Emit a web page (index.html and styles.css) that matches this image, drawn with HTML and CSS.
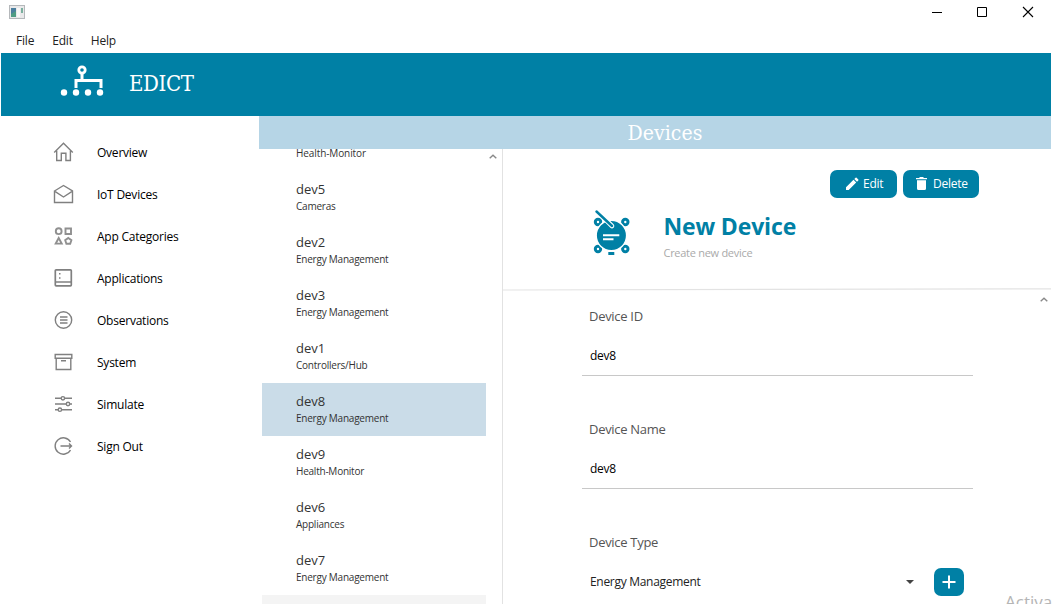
FILE: index.html
```html
<!DOCTYPE html>
<html lang="en">
<head>
<meta charset="utf-8">
<title>EDICT</title>
<link rel="stylesheet" href="styles.css">
</head>
<body>
<div class="window">
  <div class="titlebar">
    <svg class="app-icon" width="16" height="14" viewBox="0 0 16 14"><rect x=".5" y=".5" width="15" height="13" fill="#e9e9ea" stroke="#b5b8bb"/><rect x="2" y="3" width="5" height="9" fill="#4f9c83"/><path d="M2 3h5v3L2 9z" fill="#4c7f9e"/><rect x="8" y="3" width="3" height="9" fill="#f8f8f8"/><rect x="12" y="3" width="2" height="5" fill="#7aaf9e"/></svg>
    <svg class="controls" width="104" height="12" viewBox="0 0 104 12" fill="none" stroke="#000"><path d="M0 6.500h10M45.500 1.500h9v9h-9z"/><path d="M91 1l10 10M101 1l-10 10" stroke-width="1.100"/></svg>
  </div>
  <nav class="menubar"><span>File</span><span>Edit</span><span>Help</span></nav>
  <header class="brand">
    <svg width="44" height="32" viewBox="0 0 44 32" fill="none" stroke="#fff"><circle cx="22" cy="5" r="3.200" stroke-width="2.800"/><path d="M22 9v7M16 23v-7.500h25V23" stroke-width="3"/><g fill="#fff" stroke="none"><circle cx="4" cy="27.500" r="3.200"/><circle cx="16" cy="27.500" r="3.200"/><circle cx="28" cy="27.500" r="3.200"/><circle cx="40" cy="27.500" r="3.200"/></g></svg>
    <h1>EDICT</h1>
  </header>
  <div class="body">
    <aside class="sidebar">
      <a class="nav"><svg viewBox="0 0 20 20"><path d="M.7 10.500 10 1.300l9.300 9.200M3.200 8.800v9.700h4.600v-7.300h4.600v7.300h4.500V8.800"/></svg><span>Overview</span></a>
      <a class="nav"><svg viewBox="0 0 20 20"><path d="M1 7 10 1.500 19 7v11.500H1zM1 7.200l9 5.800 9-5.800"/></svg><span>IoT Devices</span></a>
      <a class="nav"><svg viewBox="0 0 20 20" class="bold"><circle cx="5.200" cy="5.200" r="2.900"/><path d="M12 2.500h5.500V8H12zM5.200 12l-3 5.600h6zM14.800 11.900l3.100 2.300-1.200 3.500h-3.800l-1.200-3.500z"/></svg><span>App Categories</span></a>
      <a class="nav"><svg viewBox="0 0 20 20"><rect x="1.800" y="1.800" width="16" height="16" rx=".8" stroke-width="1.700"/><path d="M2 14h16" stroke-width="1.500"/><path d="M5.500 5.800h1.500M5.500 9.900h1.500" stroke-width="1.500"/></svg><span>Applications</span></a>
      <a class="nav"><svg viewBox="0 0 20 20"><circle cx="10" cy="10" r="8.200"/><path d="M6.500 7h7.500M6.500 10h7.500M6.500 13h7.500"/></svg><span>Observations</span></a>
      <a class="nav"><svg viewBox="0 0 20 20"><path d="M1.700 2.500h16.600v3.700H1.700zM2.700 6.200v11.300h14.600V6.200M7.500 8.800h5"/></svg><span>System</span></a>
      <a class="nav"><svg viewBox="0 0 20 20"><path d="M1.500 4.300h6M11.200 4.300h7.300M1.500 10h11.200M16.300 10h2.200M1.500 15.700h3M8.200 15.700h10.300"/><circle cx="9.400" cy="4.300" r="1.700"/><circle cx="14.500" cy="10" r="1.700"/><circle cx="6.400" cy="15.700" r="1.700"/></svg><span>Simulate</span></a>
      <a class="nav"><svg viewBox="0 0 20 20"><path d="M17 6A8.200 8.200 0 1 0 17 14M7 10h11M15.500 7.500 18 10l-2.500 2.500"/></svg><span>Sign Out</span></a>
    </aside>
    <main class="main">
      <h2 class="page-title">Devices</h2>
      <div class="split">
        <section class="list-pane">
          <div class="list">
            <div class="item first"><small>Health-Monitor</small></div>
            <div class="item"><b>dev5</b><small>Cameras</small></div>
            <div class="item"><b>dev2</b><small>Energy Management</small></div>
            <div class="item"><b>dev3</b><small>Energy Management</small></div>
            <div class="item"><b>dev1</b><small>Controllers/Hub</small></div>
            <div class="item selected"><b>dev8</b><small>Energy Management</small></div>
            <div class="item"><b>dev9</b><small>Health-Monitor</small></div>
            <div class="item"><b>dev6</b><small>Appliances</small></div>
            <div class="item"><b>dev7</b><small>Energy Management</small></div>
            <div class="item empty"></div>
          </div>
          <svg class="up" width="8" height="5" viewBox="0 0 8 5"><path d="M.7 4.200 4 1.200l3.300 3"/></svg>
        </section>
        <section class="detail">
          <div class="detail-head">
            <div class="actions">
              <button class="btn edit"><svg width="14" height="14" viewBox="0 0 14 14" fill="#fff"><path d="M1 13v-2.700L8.500 2.800l2.700 2.700L3.700 13zM9.300 2l1.300-1.300a.8.8 0 0 1 1 0l1.700 1.700a.8.8 0 0 1 0 1L12 4.700z"/></svg>Edit</button>
              <button class="btn delete"><svg width="11" height="13" viewBox="0 0 11 13" fill="#fff"><path d="M0 1h3L4 0h3l1 1h3v1.300H0zM1 3.300h9v8.200a1.500 1.500 0 0 1-1.500 1.500h-6A1.500 1.500 0 0 1 1 11.500z"/></svg>Delete</button>
            </div>
            <div class="device">
              <svg width="38" height="46" viewBox="0 0 38 46"><g fill="#fff" stroke="#0080a5" stroke-width="3"><circle cx="5" cy="12" r="2.700"/><circle cx="32.300" cy="12" r="2.700"/><circle cx="5" cy="39" r="2.700"/><circle cx="32.300" cy="39" r="2.700"/></g><circle cx="18.400" cy="25.500" r="15.200" fill="#0080a5" stroke="#fff" stroke-width="1.400"/><path d="M15.300 42h6v3h-6z" fill="#0080a5"/><path d="M10 25.200h16.300M10 29.200h10.500" stroke="#fff" stroke-width="1.900"/><path d="M13 10l6 6" stroke="#fff" stroke-width="4.600" stroke-linecap="round"/><path d="M3.500 1.500l15.500 14.500" stroke="#0080a5" stroke-width="2.400" stroke-linecap="round"/></svg>
              <div class="device-text"><h3>New Device</h3><p>Create new device</p></div>
            </div>
          </div>
          <svg class="rule" width="548" height="3" viewBox="0 0 548 3"><path d="M0 2 548 .8" stroke="#e3e3e3" stroke-width="1.200"/></svg>
          <div class="form-wrap">
            <div class="form">
              <label>Device ID</label><div class="input">dev8</div>
              <label>Device Name</label><div class="input">dev8</div>
              <label>Device Type</label>
              <div class="select-row"><span class="value">Energy Management</span><i class="caret"></i><button class="add"><svg width="14" height="14" viewBox="0 0 14 14"><path d="M7 .5v13M.5 7h13" stroke="#fff" stroke-width="2"/></svg></button></div>
            </div>
            <svg class="up" width="8" height="5" viewBox="0 0 8 5"><path d="M.7 4.200 4 1.200l3.300 3"/></svg>
          </div>
        </section>
      </div>
    </main>
  </div>
  <div class="watermark">Activate</div>
</div>
</body>
</html>
```

FILE: styles.css
```css
* { box-sizing: border-box; }
body { margin: 0; font-family: "Open Sans", "Noto Sans", sans-serif; font-size: 12px; color: #000; background: #fff; }
h1, h2, h3, p { margin: 0; font-weight: 400; }
button { font: inherit; border: 0; padding: 0; color: #fff; background: #0080a5; }
.window { position: relative; width: 1052px; height: 604px; overflow: hidden; display: flex; flex-direction: column; padding: 0 1px; }
.titlebar { height: 29px; display: flex; justify-content: space-between; padding: 5px 15px 0 8px; }
.controls { margin-top: 1px; }
.menubar { height: 24px; display: flex; gap: 18px; padding-left: 15px; line-height: 24px; color: #222; letter-spacing: -.2px; }
.brand { height: 63px; flex: none; display: flex; background: #0080a5; color: #fff; padding: 12px 0 0 59px; }
.brand h1 { font: 22px/38px "DejaVu Serif Condensed", "DejaVu Serif", serif; margin-left: 25px; letter-spacing: -.4px; }
.body { flex: 1; min-height: 0; display: flex; }
.sidebar { width: 258px; padding-top: 15px; }
.nav { display: flex; align-items: center; height: 42px; padding-left: 52px; gap: 23px; letter-spacing: -.23px; }
.nav svg { width: 21px; height: 20px; fill: none; stroke: #808080; stroke-width: 1.400; }
.nav svg.bold { stroke: #909090; stroke-width: 1.900; }
.main { flex: 1; display: flex; flex-direction: column; min-width: 0; }
.page-title { height: 33px; flex: none; background: #b6d5e6; color: #fff; text-align: center; font: 21px/33px "DejaVu Serif Condensed", "DejaVu Serif", serif; padding: 1px 0 0 20px; letter-spacing: .1px; }
.split { flex: 1; display: flex; min-height: 0; }
.list-pane { width: 244px; display: flex; overflow: hidden; border-right: 1px solid #e2e2e2; padding-left: 3px; }
.list { width: 224px; }
.item { height: 53px; padding: 9px 0 0 34px; color: #333; display: flex; flex-direction: column; }
.item b { font-weight: 400; font-size: 13px; line-height: 19px; }
.item small { font-size: 10px; line-height: 15px; letter-spacing: -.23px; }
.item.first { height: 22px; padding-top: 0; }
.item.first small { line-height: 9px; letter-spacing: -.1px; }
.item.selected { background: #cadce8; }
.item.empty { background: #f4f4f4; }
.up { margin: 5px 0 0 3px; fill: none; stroke: #888; stroke-width: 1.400; }
.detail { flex: 1; display: flex; flex-direction: column; min-width: 0; }
.detail-head { height: 139px; flex: none; padding-top: 21px; }
.actions { display: flex; justify-content: flex-end; gap: 6px; padding-right: 72px; }
.btn { height: 28px; border-radius: 7px; display: flex; align-items: center; letter-spacing: -.25px; padding-bottom: 1px; }
.edit { width: 67px; padding-left: 15px; gap: 4px; }
.delete { width: 76px; padding-left: 13px; gap: 6px; }
.device { display: flex; padding: 12px 0 0 90px; gap: 32.500px; }
.device-text h3 { font-size: 23px; font-weight: 700; line-height: 33px; color: #0080a5; letter-spacing: -.15px; }
.device-text p { font-size: 11px; line-height: 18px; color: #aaa; margin-top: 1px; letter-spacing: -.28px; }
.rule { flex: none; }
.form-wrap { flex: 1; display: flex; padding-left: 79px; }
.form { width: 391px; padding-top: 15px; }
.form label { display: block; height: 20px; line-height: 20px; padding-left: 7px; font-size: 13px; color: #555; letter-spacing: -.3px; }
.input { height: 50px; line-height: 59px; padding-left: 8px; margin-bottom: 43px; border-bottom: 1px solid #c8c8c8; letter-spacing: -.3px; }
.select-row { display: flex; align-items: center; height: 28px; margin-top: 16px; padding: 0 9px 0 8px; color: #222; }
.value { flex: 1; letter-spacing: -.3px; padding-bottom: 2px; }
.caret { border: 4px solid transparent; border-top-color: #444; border-bottom: 0; margin-right: 20px; }
.add { width: 30px; height: 28px; border-radius: 7px; display: flex; align-items: center; justify-content: center; }
.form-wrap .up { margin: 6px 0 0 67px; }
.watermark { position: absolute; left: 1005px; top: 590px; font-size: 17px; line-height: 24px; color: #b5b5b5; }
```
